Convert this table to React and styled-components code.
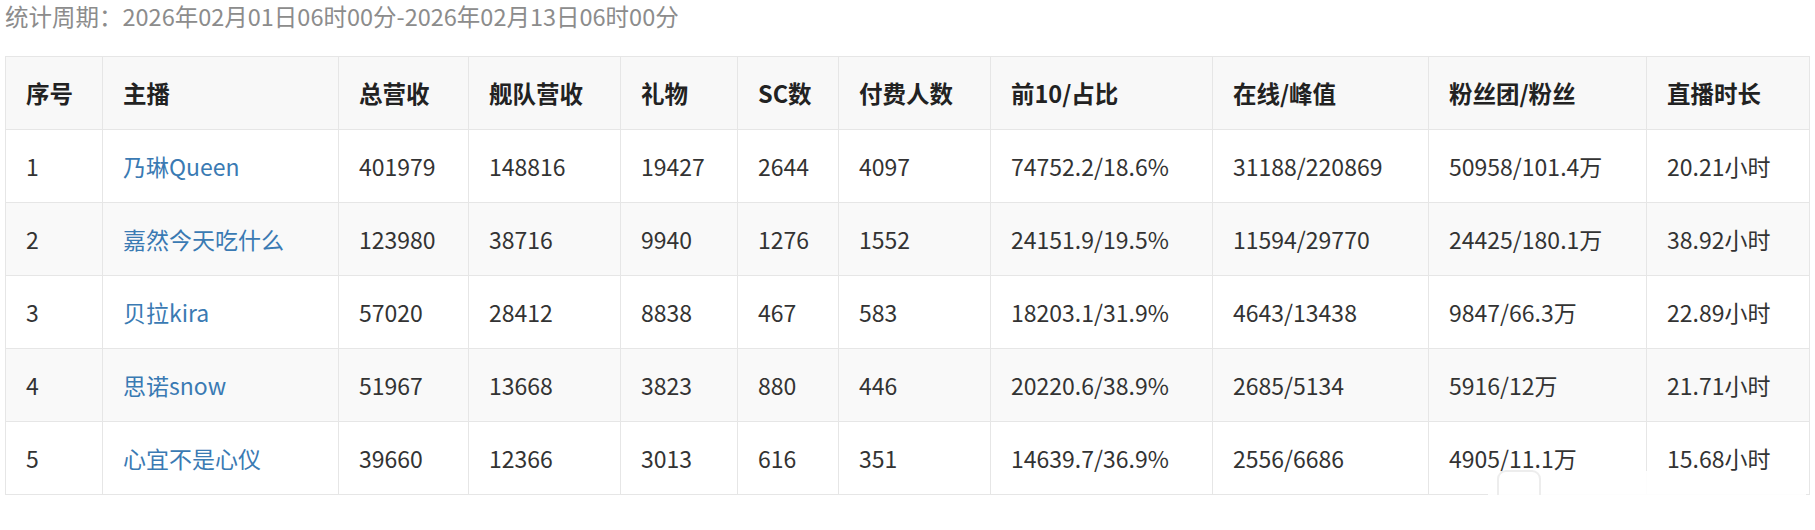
import React from "react";
import styled, { createGlobalStyle } from "styled-components";

const Global = createGlobalStyle`
  html, body { margin: 0; padding: 0; background: #fff; }
  body { font-family: "Noto Sans CJK SC", "Noto Sans", sans-serif; color: #333; }
`;

const Page = styled.div`
  position: relative;
  padding: 0 6px 0 5px;
  width: 1804px;
`;

const Period = styled.div`
  font-size: 23.5px;
  line-height: 32px;
  color: #8c8c8c;
  margin-bottom: 24px;
`;

const Table = styled.table`
  width: 1804px;
  table-layout: fixed;
  border-collapse: collapse;
  font-size: 23px;
`;

const HeadCell = styled.th`
  height: 72px;
  padding: 0 0 0 20px;
  text-align: left;
  font-weight: 700;
  font-size: 23.5px;
  color: #222;
  background: #f8f8f8;
  border: 1px solid #e6e6e6;
`;

const Row = styled.tr`
  background: ${(p) => (p.$striped ? "#f9f9f9" : "#fff")};
`;

const Cell = styled.td`
  height: 72px;
  padding: 0 0 0 20px;
  border: 1px solid #e6e6e6;
  color: #333;
  white-space: nowrap;
`;

const Anchor = styled.a`
  color: #3a7ab3;
  text-decoration: none;
`;

const Watermark = styled.div`
  position: absolute;
  left: 1488px;
  top: 471px;
  width: 318px;
  height: 26px;
  background: rgba(255, 255, 255, 0.9);
  pointer-events: none;
`;

const WatermarkLogo = styled.div`
  position: absolute;
  left: 1497px;
  top: 470px;
  width: 44px;
  height: 36px;
  border: 2px solid rgba(235, 235, 235, 0.9);
  border-radius: 9px;
  box-sizing: border-box;
  pointer-events: none;
`;

const columns = [
  ["序号", 97],
  ["主播", 236],
  ["总营收", 130],
  ["舰队营收", 152],
  ["礼物", 117],
  ["SC数", 101],
  ["付费人数", 152],
  ["前10/占比", 222],
  ["在线/峰值", 216],
  ["粉丝团/粉丝", 218],
  ["直播时长", 163],
];

const rows = [
  ["1", "乃琳Queen", "401979", "148816", "19427", "2644", "4097", "74752.2/18.6%", "31188/220869", "50958/101.4万", "20.21小时"],
  ["2", "嘉然今天吃什么", "123980", "38716", "9940", "1276", "1552", "24151.9/19.5%", "11594/29770", "24425/180.1万", "38.92小时"],
  ["3", "贝拉kira", "57020", "28412", "8838", "467", "583", "18203.1/31.9%", "4643/13438", "9847/66.3万", "22.89小时"],
  ["4", "思诺snow", "51967", "13668", "3823", "880", "446", "20220.6/38.9%", "2685/5134", "5916/12万", "21.71小时"],
  ["5", "心宜不是心仪", "39660", "12366", "3013", "616", "351", "14639.7/36.9%", "2556/6686", "4905/11.1万", "15.68小时"],
];

export default function App() {
  return (
    <Page>
      <Global />
      <Period>统计周期：2026年02月01日06时00分-2026年02月13日06时00分</Period>
      <Table>
        <colgroup>
          {columns.map(([k, w]) => (
            <col key={k} style={{ width: w }} />
          ))}
        </colgroup>
        <thead>
          <tr>
            {columns.map(([k]) => (
              <HeadCell key={k}>{k}</HeadCell>
            ))}
          </tr>
        </thead>
        <tbody>
          {rows.map((r, i) => (
            <Row key={r[0]} $striped={i % 2 === 1}>
              {r.map((v, j) => (
                <Cell key={j}>{j === 1 ? <Anchor href="#">{v}</Anchor> : v}</Cell>
              ))}
            </Row>
          ))}
        </tbody>
      </Table>
      <Watermark />
      <WatermarkLogo />
    </Page>
  );
}
